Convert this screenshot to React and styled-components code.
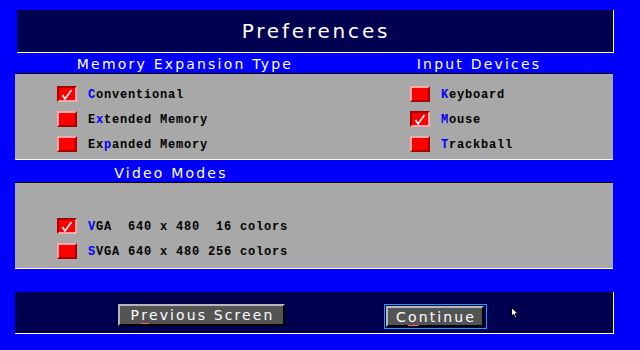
import React from "react";
import styled, { createGlobalStyle } from "styled-components";

const COLORS = {
  blue: "#0000fc",
  navy: "#000050",
  gray: "#a8a8a8",
  face: "#545454",
  red: "#fc0000",
  pink: "#fca8a8",
  darkRed: "#a80000",
  hotkey: "#0000fc",
  focus: "#18a0f0",
};

const GlobalStyle = createGlobalStyle`
  html, body {
    margin: 0;
    padding: 0;
    background: ${COLORS.blue};
  }
`;

const Screen = styled.div`
  width: 640px;
  height: 350px;
  box-sizing: border-box;
  background: ${COLORS.blue};
  padding: 10px 0 0 15px;
  display: flex;
  flex-direction: column;
  overflow: hidden;
`;

const TitleBar = styled.div`
  margin-left: 2px;
  width: 597px;
  height: 43px;
  box-sizing: border-box;
  background: ${COLORS.navy};
  border-right: 1px solid #fff;
  border-bottom: 1px solid #fff;
  display: flex;
  align-items: center;
  justify-content: center;
  color: #fff;
  font-family: "DejaVu Sans", sans-serif;
  font-size: 20px;
  letter-spacing: 2.8px;
  padding-left: 2px;
`;

const HeaderRow = styled.div`
  display: flex;
  height: ${(p) => p.$height}px;
  align-items: center;
`;

const Header = styled.div`
  width: ${(p) => p.$width}px;
  text-align: center;
  color: #fff;
  font-family: "DejaVu Sans", sans-serif;
  font-size: 14px;
  letter-spacing: 2.2px;
  line-height: 1;
  padding-top: ${(p) => p.$drop || 0}px;
`;

const Panel = styled.div`
  width: 598px;
  box-sizing: border-box;
  background: ${COLORS.gray};
  border-top: 1px solid #000;
  border-bottom: 1px solid #fff;
  display: flex;
  padding: ${(p) => p.$padding};
`;

const Column = styled.div`
  width: ${(p) => p.$width}px;
  box-sizing: border-box;
  padding-left: ${(p) => p.$indent}px;
  display: flex;
  flex-direction: column;
  gap: 9px;
`;

const Row = styled.div`
  display: flex;
  align-items: center;
  gap: 11px;
  height: 16px;
`;

const Box = styled.div`
  width: 20px;
  height: 16px;
  box-sizing: border-box;
  background: ${COLORS.red};
  border: 2px solid;
  border-color: ${(p) =>
    p.$checked
      ? `${COLORS.darkRed} ${COLORS.pink} ${COLORS.pink} ${COLORS.darkRed}`
      : `${COLORS.pink} ${COLORS.darkRed} ${COLORS.darkRed} ${COLORS.pink}`};
  display: flex;
  align-items: center;
  justify-content: center;
  flex-shrink: 0;
`;

const Label = styled.span`
  font-family: "Liberation Mono", monospace;
  font-weight: 700;
  font-size: 12px;
  letter-spacing: 0.8px;
  color: #000;
  white-space: pre;
  padding-top: 1px;
`;

const Hot = styled.span`
  color: ${COLORS.hotkey};
`;

const ButtonBar = styled.div`
  position: relative;
  margin-top: 23px;
  width: 599px;
  height: 42px;
  box-sizing: border-box;
  background: ${COLORS.navy};
  border-right: 1px solid #fff;
  border-bottom: 1px solid #fff;
  display: flex;
  align-items: flex-start;
  padding-top: 12px;
`;

const Button = styled.div`
  width: ${(p) => p.$width}px;
  height: ${(p) => p.$height}px;
  margin-left: ${(p) => p.$offset || 0}px;
  box-sizing: border-box;
  background: ${COLORS.face};
  border: 2px solid;
  border-color: #b8b8b8 #000 #000 #b8b8b8;
  color: #fff;
  font-family: "DejaVu Sans", sans-serif;
  font-size: 14px;
  letter-spacing: 2.1px;
  display: flex;
  align-items: center;
  justify-content: center;
  padding-left: 2px;
`;

const FocusRing = styled.div`
  margin-left: ${(p) => p.$offset}px;
  border: 1px solid ${COLORS.focus};
  padding: 1px 2px 1px 1px;
`;

const Accel = styled.span`
  text-decoration: underline;
  text-decoration-color: #fc6060;
  text-decoration-thickness: 1px;
  text-underline-offset: 3px;
`;

const Cursor = styled.svg`
  position: absolute;
  left: 496px;
  top: 15px;
`;

const Check = () => (
  <svg width="12" height="11" viewBox="0 0 12 11">
    <path d="M1.5 6 L4 10 L10.5 1" fill="none" stroke="#fff" strokeWidth="1.6" />
  </svg>
);

const Option = ({ checked, children }) => (
  <Row>
    <Box $checked={checked}>{checked && <Check />}</Box>
    <Label>{children}</Label>
  </Row>
);

export default function App() {
  return (
    <>
      <GlobalStyle />
      <Screen>
        <TitleBar>Preferences</TitleBar>

        <HeaderRow $height={20}>
          <Header $width={340} $drop={2}>Memory Expansion Type</Header>
          <Header $width={248} $drop={2}>Input Devices</Header>
        </HeaderRow>
        <Panel $padding="12px 0 7px 0">
          <Column $width={340} $indent={42}>
            <Option checked>
              <Hot>C</Hot>onventional
            </Option>
            <Option>
              E<Hot>x</Hot>tended Memory
            </Option>
            <Option>
              Ex<Hot>p</Hot>anded Memory
            </Option>
          </Column>
          <Column $width={258} $indent={55}>
            <Option>
              <Hot>K</Hot>eyboard
            </Option>
            <Option checked>
              <Hot>M</Hot>ouse
            </Option>
            <Option>
              <Hot>T</Hot>rackball
            </Option>
          </Column>
        </Panel>

        <HeaderRow $height={22}>
          <Header $width={312} $drop={3}>Video Modes</Header>
        </HeaderRow>
        <Panel $padding="35px 0 9px 0">
          <Column $width={340} $indent={42}>
            <Option checked>
              <Hot>V</Hot>GA  640 x 480  16 colors
            </Option>
            <Option>
              <Hot>S</Hot>VGA 640 x 480 256 colors
            </Option>
          </Column>
        </Panel>

        <ButtonBar>
          <Button $width={167} $height={22} $offset={103}>
            P<Accel>r</Accel>evious Screen
          </Button>
          <FocusRing $offset={99}>
            <Button $width={98} $height={21}>
              C<Accel>o</Accel>ntinue
            </Button>
          </FocusRing>
          <Cursor width="8" height="12" viewBox="0 0 8 12">
            <path d="M0.5 0.5 L0.5 9 L2.5 7.2 L4.5 11 L5.8 10.3 L4 6.8 L7 6.6 Z" fill="#fff" stroke="#000" strokeWidth="1" />
          </Cursor>
        </ButtonBar>
      </Screen>
    </>
  );
}
